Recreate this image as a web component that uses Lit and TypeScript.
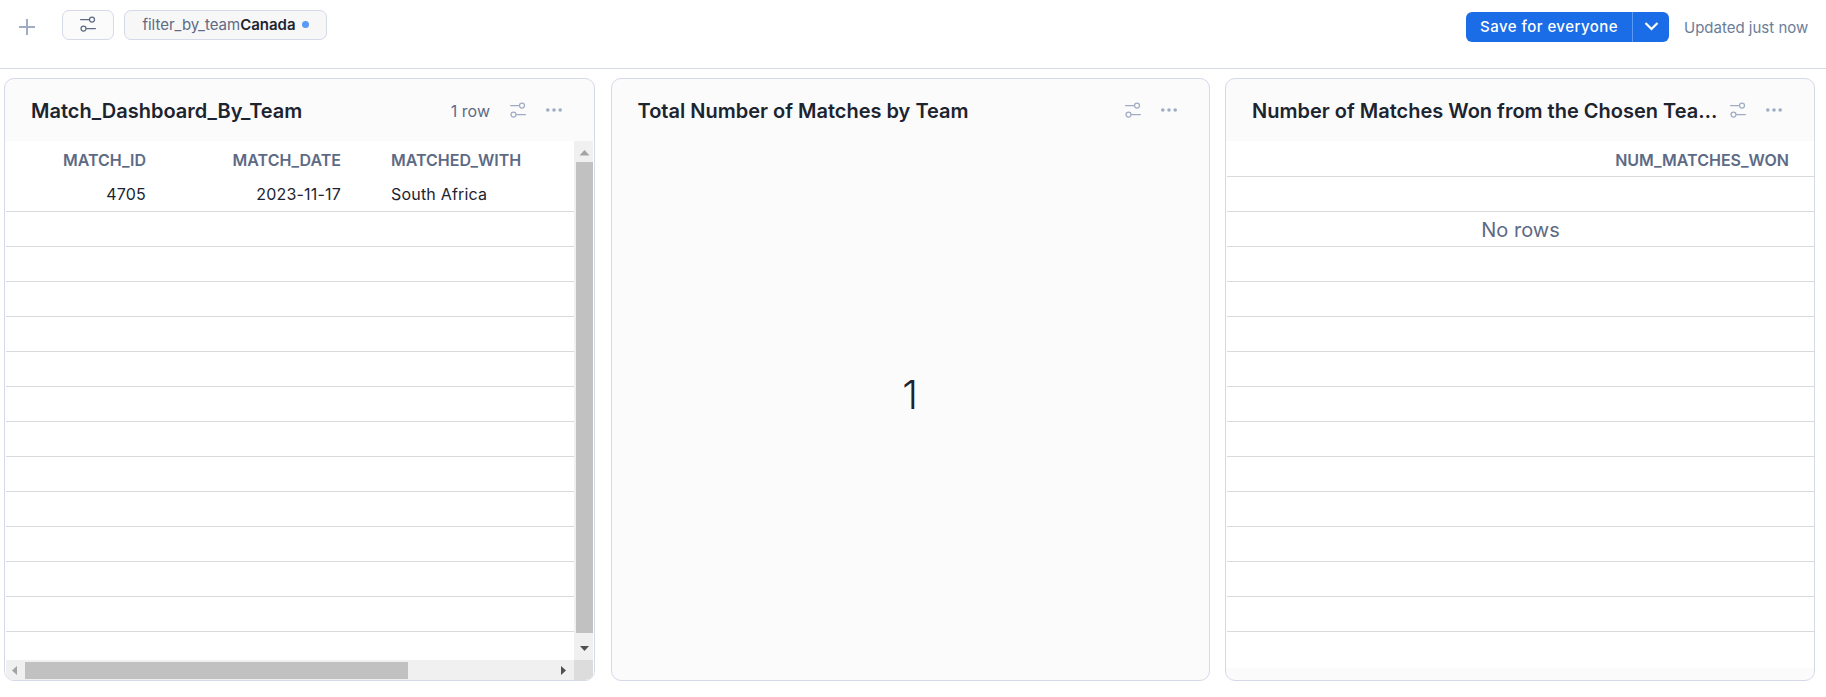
import { LitElement, html, css, svg, nothing } from "lit";
import { customElement, property } from "lit/decorators.js";

@customElement("sliders-icon")
class SlidersIcon extends LitElement {
  static styles = css`
    :host { display: block; width: 16px; height: 16px; }
    svg { display: block; fill: none; stroke: currentColor; stroke-width: 1.25; stroke-linecap: round; }
  `;
  render() {
    return html`<svg width="16" height="16" viewBox="0 0 16 16">
      <path d="M.6 3.5H9.4M6.6 12.5H15.4" /><circle cx="12" cy="3.5" r="2.5" /><circle cx="3.5" cy="12.5" r="2.5" />
    </svg>`;
  }
}

@customElement("dash-card")
class DashCard extends LitElement {
  @property() heading = "";
  @property() count = "";
  static styles = css`
    :host {
      display: flex; flex-direction: column; box-sizing: border-box; min-width: 0; overflow: hidden;
      border: 1px solid #d5d9e8; border-radius: 10px; background: #fbfbfc;
    }
    header { display: flex; align-items: center; height: 62px; padding: 0 32px 0 26px; box-sizing: border-box; color: #a0acc3; flex: none; }
    h2 { flex: 1; min-width: 0; margin: 2px 10px 0 0; font: 600 20px/28px Inter, sans-serif; color: #1c2430; white-space: nowrap; overflow: hidden; text-overflow: ellipsis; }
    .count { margin: 2px 20px 0 0; font-size: 16px; color: #5d6a85; }
    .dots { display: block; margin-left: 20px; fill: currentColor; }
    .body { flex: 1; min-height: 0; display: flex; flex-direction: column; }
  `;
  render() {
    return html`<header>
        <h2>${this.heading}</h2>
        ${this.count ? html`<span class="count">${this.count}</span>` : nothing}
        <sliders-icon></sliders-icon>
        <svg class="dots" width="16" height="16" viewBox="0 0 16 16">
          <circle cx="1.8" cy="8" r="1.8" /><circle cx="8" cy="8" r="1.8" /><circle cx="14.2" cy="8" r="1.8" />
        </svg>
      </header>
      <div class="body"><slot></slot></div>`;
  }
}

@customElement("app-root")
class AppRoot extends LitElement {
  static styles = css`
    :host { display: block; height: 697px; overflow: hidden; background: #fff; font-family: Inter, sans-serif; color: #1c2430; }
    .toolbar { display: flex; align-items: flex-start; height: 69px; box-sizing: border-box; padding: 10px 17px 0 19px; border-bottom: 1px solid #d5d9e8; }
    .plus { display: block; margin: 9px 27px 0 0; stroke: #a0acc3; stroke-width: 2; }
    .chip { display: flex; align-items: center; justify-content: center; box-sizing: border-box; height: 30px; border: 1px solid #d5d9e8; border-radius: 7px; background: #fbfbfb; color: #5d6a85; font-size: 15px; white-space: pre; }
    .settings { width: 52px; margin-right: 10px; padding-bottom: 2px; }
    .filter { width: 203px; background: #f7f7f7; padding-bottom: 1px; }
    .filter b { font-weight: 600; color: #1c2430; }
    .dot { width: 7px; height: 7px; border-radius: 50%; background: #5999f8; margin-left: 6px; }
    .grow { flex: 1; }
    .save { display: flex; height: 30px; width: 203px; margin-top: 2px; border-radius: 6px; background: #1a6ce7; color: #fff; overflow: hidden; font-size: 15px; font-weight: 500; line-height: 30px; }
    .save span { width: 166px; text-align: center; border-right: 1px solid #5999f8; letter-spacing: .45px; }
    .save svg { display: block; margin: 9px 0 0 11px; fill: none; stroke: #fff; stroke-width: 2.2; }
    .updated { width: 125px; margin: 8px 0 0 15px; font-size: 15px; line-height: 20px; color: #6b7d99; white-space: nowrap; }
    .cards { display: grid; grid-template-columns: 591px 599px 590px; column-gap: 15.5px; height: 603px; margin: 9px 0 0 4px; }
    .scroll { flex: 1; display: grid; grid-template-columns: 1fr 19px; grid-template-rows: 1fr 20px; padding: 0 1px; background: #fff; }
    .sheet { min-height: 0; overflow: hidden; }
    .cells { display: grid; grid-template-columns: 165px 195px 1fr; height: 35px; line-height: 35px; box-sizing: border-box; border-bottom: 1px solid #d8dadd; font-size: 16px; }
    .cells > * { padding: 0 25px; text-align: right; white-space: nowrap; }
    .cells > .left { text-align: left; }
    .head { font-weight: 600; color: #5d6a85; height: 36px; line-height: 39px; }
    .plain { border-bottom-color: transparent; }
    .record { letter-spacing: .2px; }
    .vbar, .hbar { display: flex; background: #f0f0f0; }
    .vbar { flex-direction: column; }
    .vbar svg, .hbar svg { display: block; flex: none; }
    .vthumb { height: 471px; margin-left: 2px; background: #c1c1c1; }
    .hthumb { width: 383px; margin: 2px 0 1px; background: #c1c1c1; }
    .end { margin-left: auto; }
    .corner { background: #dcdcdc; }
    .faded { fill: #a3a3a3; }
    .solid { fill: #505050; }
    .value { flex: 1; display: flex; align-items: center; justify-content: center; font-size: 40px; font-weight: 300; padding-bottom: 33px; }
    .empty { background: #fff; height: 527px; padding: 0 0 0 1px; overflow: hidden; }
    .empty .cells { grid-template-columns: 1fr; }
    .empty .message { text-align: center; font-size: 20px; color: #5d6a85; line-height: 37px; }
  `;

  private rows(n: number) {
    return Array.from({ length: n }, () => html`<div class="cells"></div>`);
  }

  render() {
    return html`
      <div class="toolbar">
        <svg class="plus" width="16" height="16" viewBox="0 0 16 16"><path d="M8 0V16M0 8H16" /></svg>
        <div class="chip settings"><sliders-icon></sliders-icon></div>
        <div class="chip filter"><span>filter_by_team</span> <b>Canada</b><span class="dot"></span></div>
        <div class="grow"></div>
        <div class="save"><span>Save for everyone</span><svg width="15" height="12" viewBox="0 0 15 12"><path d="M1.5 2L7.5 8L13.5 2" /></svg></div>
        <div class="updated">Updated just now</div>
      </div>
      <div class="cards">
        <dash-card heading="Match_Dashboard_By_Team" count="1 row">
          <div class="scroll">
            <div class="sheet">
              <div class="cells head plain"><span>MATCH_ID</span><span>MATCH_DATE</span><span class="left">MATCHED_WITH</span></div>
              <div class="cells record"><span>4705</span><span>2023-11-17</span><span class="left">South Africa</span></div>
              ${this.rows(12)}
            </div>
            <div class="vbar">
              <svg width="19" height="21"><path class="faded" d="M5.5 14.5L10.5 9L15.5 14.5Z" /></svg>
              <div class="vthumb"></div>
              <svg class="end" width="19" height="27"><path class="solid" d="M6 13H15L10.5 18Z" /></svg>
            </div>
            <div class="hbar">
              <svg width="19" height="20"><path class="faded" d="M11 6V15L6 10.5Z" /></svg>
              <div class="hthumb"></div>
              <svg class="end" width="19" height="20"><path class="solid" d="M6 6V15L11 10.5Z" /></svg>
            </div>
            <div class="corner"></div>
          </div>
        </dash-card>
        <dash-card heading="Total Number of Matches by Team"><div class="value">1</div></dash-card>
        <dash-card heading="Number of Matches Won from the Chosen Team as Filter">
          <div class="empty">
            <div class="cells head"><span>NUM_MATCHES_WON</span></div>
            ${this.rows(1)}
            <div class="cells"><span class="message">No rows</span></div>
            ${this.rows(11)}
          </div>
        </dash-card>
      </div>`;
  }
}
